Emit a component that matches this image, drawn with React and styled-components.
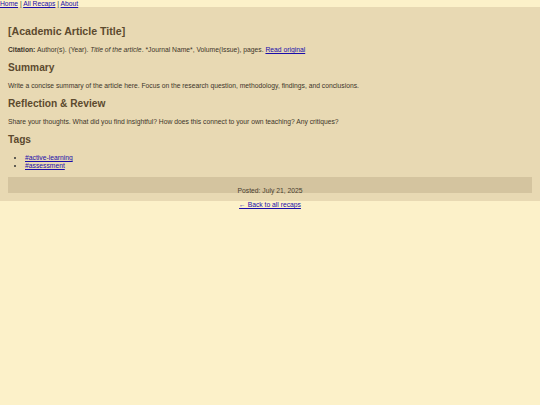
import React from "react";
import styled, { createGlobalStyle } from "styled-components";

const Global = createGlobalStyle`
  html, body { margin: 0; padding: 0; }
  body {
    background: #fcf1c9;
    font-family: "Liberation Sans", Arial, sans-serif;
    color: #333;
  }
  a { color: #1a0dab; }
`;

const Nav = styled.nav`
  font-size: 6.75px;
  line-height: 7px;
  height: 7px;
  color: #333;
  a { color: #1a0dab; }
`;

const Article = styled.article`
  background: #e8d9b3;
  padding: 8px;
`;

const Title = styled.h1`
  font-size: 10.6px;
  line-height: 14px;
  margin: 9px 0 8px;
  color: #5c4a2e;
  font-weight: bold;
`;

const Heading = styled.h2`
  font-size: 10.2px;
  line-height: 12px;
  margin: 0 0 8px;
  color: #5c4a2e;
  font-weight: bold;
`;

const Para = styled.p`
  font-size: 6.75px;
  line-height: 8px;
  margin: 0 0 8px;
  color: #3d352a;
`;

const TagList = styled.ul`
  margin: 0 0 7px;
  padding-left: 17px;
  font-size: 6.75px;
  line-height: 8px;
  list-style: disc;
  a { color: #1a0dab; }
`;

const Footer = styled.footer`
  background: #d4c49f;
  height: 16px;
  text-align: center;
  font-size: 6.75px;
  color: #4a4030;
`;

const Posted = styled.div`
  padding-top: 10px;
  line-height: 8px;
`;

const Back = styled.div`
  text-align: center;
  font-size: 6.75px;
  line-height: 8px;
  a { color: #1a0dab; }
`;

export default function App() {
  return (
    <>
      <Global />
      <Nav>
        <a href="#">Home</a> | <a href="#">All Recaps</a> | <a href="#">About</a>
      </Nav>
      <Article>
        <Title>[Academic Article Title]</Title>
        <Para>
          <strong>Citation:</strong> Author(s). (Year). <em>Title of the article</em>. *Journal Name*,
          Volume(Issue), pages. <a href="#">Read original</a>
        </Para>
        <Heading>Summary</Heading>
        <Para>
          Write a concise summary of the article here. Focus on the research question, methodology,
          findings, and conclusions.
        </Para>
        <Heading>Reflection &amp; Review</Heading>
        <Para>
          Share your thoughts. What did you find insightful? How does this connect to your own
          teaching? Any critiques?
        </Para>
        <Heading>Tags</Heading>
        <TagList>
          <li><a href="#">#active-learning</a></li>
          <li><a href="#">#assessment</a></li>
        </TagList>
        <Footer>
          <Posted>Posted: July 21, 2025</Posted>
        </Footer>
      </Article>
      <Back>
        <a href="#">← Back to all recaps</a>
      </Back>
    </>
  );
}
